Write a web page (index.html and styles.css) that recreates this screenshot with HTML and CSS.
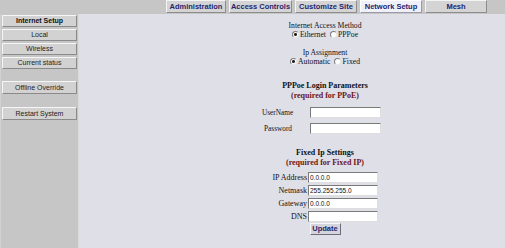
FILE: index.html
```html
<!DOCTYPE html>
<html>
<head>
<meta charset="utf-8">
<link rel="stylesheet" href="styles.css">
</head>
<body>
<div class="topbar">
  <div class="tab">Administration</div>
  <div class="tab tab-w63">Access Controls</div>
  <div class="tab">Customize Site</div>
  <div class="tab tab-active">Network Setup</div>
  <div class="tab">Mesh</div>
</div>
<div class="layout">
  <div class="sidebar">
    <div class="navbtn navbtn-bold">Internet Setup</div>
    <div class="navbtn">Local</div>
    <div class="navbtn">Wireless</div>
    <div class="navbtn">Current status</div>
    <div class="navbtn navbtn-sep">Offline Override</div>
    <div class="navbtn navbtn-sep navbtn-last">Restart System</div>
  </div>
  <div class="main">
    <div class="label first">Internet Access Method</div>
    <div class="radios">
      <label class="radio-opt"><input type="radio" name="method" checked> Ethernet</label>
      <label class="radio-opt"><input type="radio" name="method"> PPPoe</label>
    </div>
    <div class="label gap-ip">Ip Assignment</div>
    <div class="radios">
      <label class="radio-opt"><input type="radio" name="assign" checked> Automatic</label>
      <label class="radio-opt"><input type="radio" name="assign"> Fixed</label>
    </div>
    <div class="heading gap-pppoe">PPPoe Login Parameters</div>
    <div class="required">(required for PPoE)</div>
    <div class="form-pppoe">
      <div class="flabel">UserName</div><input class="field" type="text">
      <div class="flabel">Password</div><input class="field" type="password">
    </div>
    <div class="heading gap-fixed">Fixed Ip Settings</div>
    <div class="required">(required for Fixed IP)</div>
    <div class="form-fixed">
      <div class="flabel">IP Address</div><input class="field" type="text" value="0.0.0.0">
      <div class="flabel">Netmask</div><input class="field" type="text" value="255.255.255.0">
      <div class="flabel">Gateway</div><input class="field" type="text" value="0.0.0.0">
      <div class="flabel">DNS</div><input class="field" type="text" value="">
    </div>
    <button class="update" type="button">Update</button>
  </div>
</div>
</body>
</html>
```
FILE: styles.css
```css
html, body {
  margin: 0;
  padding: 0;
}
body {
  width: 505px;
  height: 248px;
  overflow: hidden;
  background: #dfdfe8;
  font-family: "Liberation Serif", "Times New Roman", serif;
  display: flex;
  flex-direction: column;
}
.topbar {
  height: 14px;
  flex: none;
  background: #c6c6c6;
  display: flex;
  gap: 3px;
  padding-left: 166px;
  box-sizing: border-box;
}
.tab {
  width: 60px;
  height: 13px;
  box-sizing: border-box;
  background: #d4d4d4;
  border: 1px solid;
  border-color: #f4f4f4 #8c8c8c #8c8c8c #f4f4f4;
  font-family: "Liberation Sans", Arial, sans-serif;
  font-weight: bold;
  font-size: 7.5px;
  line-height: 11px;
  color: #24246e;
  text-align: center;
  white-space: nowrap;
  overflow: hidden;
}
.tab-w63 { width: 63px; }
.tab:nth-child(n+3) { width: 62px; }
.tab-active {
  background: #f0f0fa;
  border-color: #ffffff #9a9aa6 #9a9aa6 #ffffff;
}
.layout {
  flex: 1;
  display: flex;
}
.sidebar {
  width: 79px;
  flex: none;
  box-sizing: border-box;
  background: #c6c6c6;
  border-left: 1px solid #d2d2d2;
  border-right: 1px solid #dadada;
  padding: 1px 0 0 1px;
  display: flex;
  flex-direction: column;
  gap: 2px;
}
.navbtn {
  width: 75px;
  height: 12px;
  box-sizing: border-box;
  background: #d2d2d2;
  border: 1px solid;
  border-color: #f6f6f6 #8a8a8a #8a8a8a #f6f6f6;
  font-family: "Liberation Sans", Arial, sans-serif;
  font-size: 7px;
  line-height: 10px;
  color: #222;
  text-align: center;
  white-space: nowrap;
}
.navbtn-bold { font-weight: bold; color: #111; }
.navbtn-sep { margin-top: 10px; height: 13px; line-height: 11px; }
.navbtn-last { margin-top: 11px; }
.main {
  flex: 1;
  display: flex;
  flex-direction: column;
  align-items: center;
  padding-left: 66px;
  color: #111;
}
.label {
  font-size: 7.7px;
  line-height: 9px;
  white-space: nowrap;
}
.first { margin-top: 7px; }
.gap-ip { margin-top: 9px; }
.radios {
  display: flex;
  gap: 4px;
  font-size: 7.7px;
  line-height: 9px;
  white-space: nowrap;
}
.radio-opt {
  display: flex;
  align-items: center;
  gap: 1px;
}
.radio-opt input {
  appearance: none;
  -webkit-appearance: none;
  margin: 0;
  width: 7px;
  height: 7px;
  border-radius: 50%;
  border: 1px solid;
  border-color: #7a7a7a #e6e6e6 #e6e6e6 #7a7a7a;
  background: #fff;
  box-sizing: border-box;
}
.radio-opt input:checked {
  background: radial-gradient(circle, #222 0 1.3px, #fff 1.6px);
}
.heading {
  font-weight: bold;
  font-size: 8px;
  line-height: 10px;
  white-space: nowrap;
}
.gap-pppoe { margin-top: 15px; }
.gap-fixed { margin-top: 14px; }
.required {
  font-weight: bold;
  font-size: 8px;
  line-height: 10px;
  color: #6e1616;
  white-space: nowrap;
}
.form-pppoe {
  display: grid;
  grid-template-columns: 30px 71px;
  column-gap: 18px;
  row-gap: 5px;
  margin-top: 6px;
  margin-right: 7px;
  align-items: center;
}
.form-fixed {
  display: grid;
  grid-template-columns: 41px 70px;
  column-gap: 1px;
  row-gap: 2px;
  margin-top: 4px;
  margin-right: 6px;
  align-items: center;
}
.flabel {
  font-size: 7.3px;
  line-height: 11px;
  text-align: right;
  white-space: nowrap;
}
.form-fixed .flabel { font-size: 8px; }
.field {
  height: 11px;
  width: 100%;
  box-sizing: border-box;
  margin: 0;
  padding: 0 1px;
  border: 1px solid;
  border-color: #7a7a7a #dedede #dedede #7a7a7a;
  background: #fff;
  font-family: "Liberation Sans", Arial, sans-serif;
  font-size: 6.5px;
  line-height: 9px;
  color: #111;
  outline: none;
}
.update {
  margin-top: 1px;
  width: 31px;
  height: 12px;
  padding: 0;
  box-sizing: border-box;
  background: #d4d4dc;
  border: 1px solid;
  border-color: #f6f6f6 #6e6e7a #6e6e7a #f6f6f6;
  font-family: "Liberation Sans", Arial, sans-serif;
  font-weight: bold;
  font-size: 7.5px;
  line-height: 10px;
  color: #24246e;
}
```
